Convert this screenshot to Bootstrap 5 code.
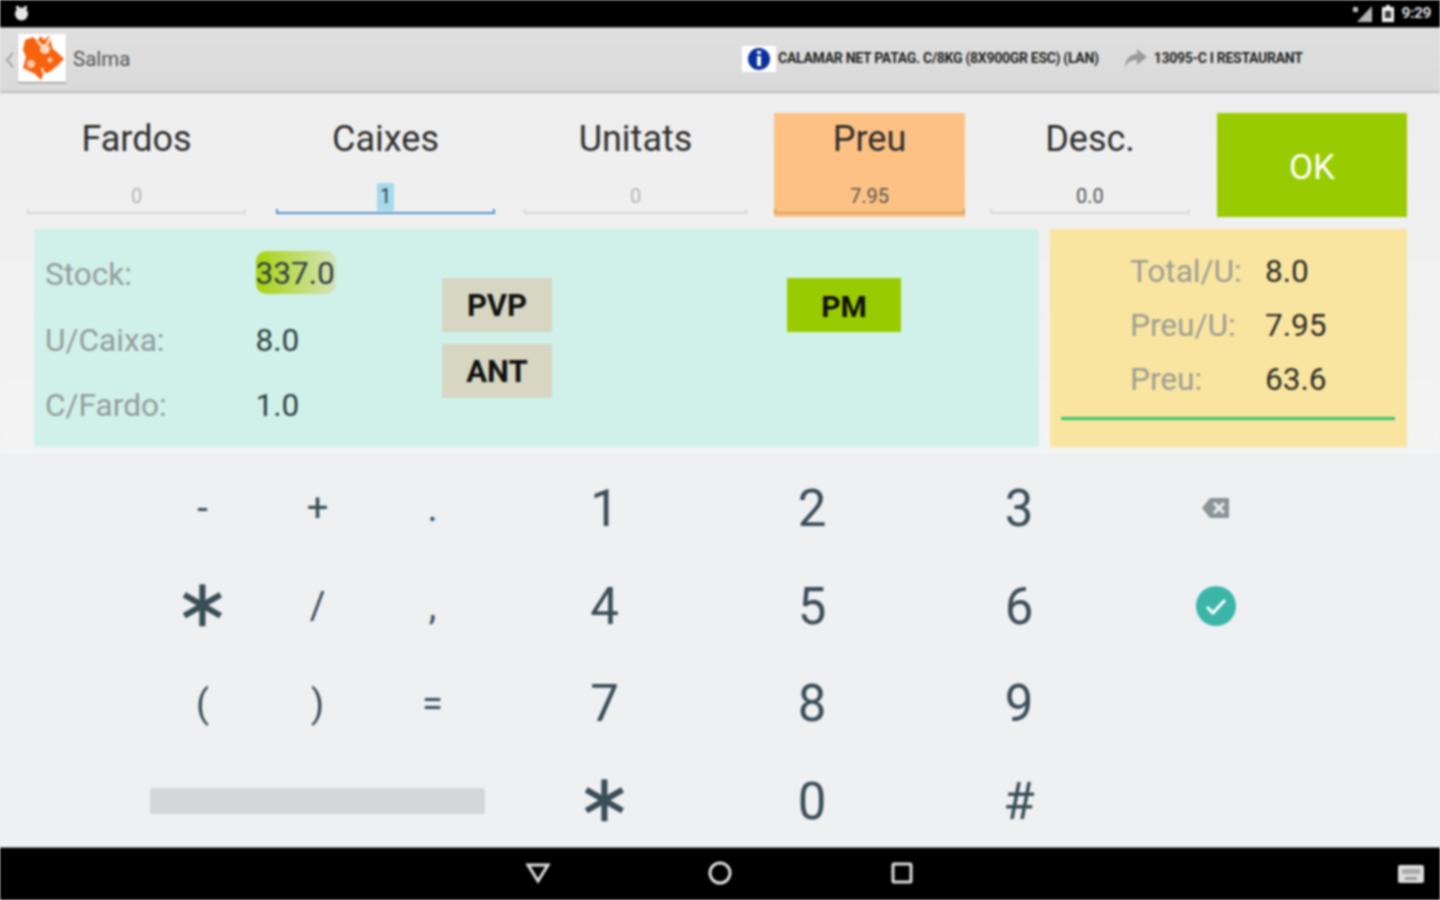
<!DOCTYPE html>
<html lang="ca">
<head>
<meta charset="utf-8">
<title>Salma</title>
<link href="https://cdn.jsdelivr.net/npm/bootstrap@5.3.0/dist/css/bootstrap.min.css" rel="stylesheet">
<style>
html,body{height:100%;margin:0;overflow:hidden}
body{font-family:Roboto,"Liberation Sans",sans-serif;background:#eef0f2;color:#37474f}
.screen{width:1440px;height:900px;filter:blur(.8px)}
.statusbar{height:27px;background:#000;color:#ddd;padding:0 9px 0 14px;font-size:15.5px;font-weight:700}
.statusbar .clock{letter-spacing:-.4px}
.appbar{height:66px;background:linear-gradient(#dfdfdf,#dadada);border-bottom:2px solid #bdbdbd;border-top:1px solid #8d8d8d;padding-left:4px}
.backmark{width:12px;margin-right:2px}
.logobox{width:48px;height:48px;background:#fff;box-shadow:0 1px 1px #888;margin-top:-3px}
.apptitle{font-size:20.5px;color:#555;margin-left:7px;width:669px;margin-top:-1px}
.infobox{width:34px;height:26px;background:#fff;margin-right:2px;margin-top:-1px}
.smallcap{font-size:14px;font-weight:700;color:#222;letter-spacing:-.28px;white-space:nowrap;margin-top:-2px}
.forward{margin-left:24px;margin-right:7px;margin-top:-3px}
.upper{height:360px;background:linear-gradient(#eeeeee,#f4f4f4);padding:20px 33px 0 27px}
.fields{display:flex;height:104px}
.fieldcell{display:flex;flex-direction:column;align-items:center;height:104px;color:#2e2e2e}
.fieldcell .lbl{font-size:36px;line-height:52px}
.fieldcell .val{font-size:20px;line-height:26px;margin-top:18px;color:#b5b5b5;height:26px}
.rule{width:100%;height:2px;background:#d6d6d6;margin-top:3px;position:relative}
.rule::before,.rule::after{content:"";position:absolute;bottom:0;width:2px;height:5px;background:inherit}
.rule::before{left:0}
.rule::after{right:0}
.f1{width:219px}
.f2{margin-left:30px;width:219px}
.f3{margin-left:29px;width:223px}
.f4{margin-left:27px;width:191px;background:#fdc283}
.f5{margin-left:25px;width:200px}
.f6{margin-left:27px;width:190px;background:#99cc00;color:#fff;font-size:35px;border-radius:0;border:0;padding:6px 0 0}
.f2 .rule{background:#4f97c9}
.f4 .rule{background:#dca060}
.f4 .val,.f5 .val{color:#555}
.sel{display:inline-block;background:#a6d9ec;color:#2f3f47;padding:0 3px;height:28px}
.panels{display:flex;gap:11px;margin:12px 0 0 7px}
.mint{width:1005px;height:218px;background:#d0f1ea;display:flex}
.sand{width:357px;height:218px;background:#f9e5a0;padding:15px 12px 0 11px}
.infocol{width:408px;padding:18px 0 0 11px}
.inforow{display:flex;font-size:31.6px;height:65.5px;line-height:56px;align-items:flex-start}
.inforow .key{width:210.5px;color:#939c9c}
.inforow .num{color:#2f3f42}
.stockval{background:linear-gradient(90deg,#a6d40f,#d6e3bb);border-radius:10px;height:43px;line-height:46px;margin-top:4px;color:#2a3a17;width:80px}
.btncol{display:flex;flex-direction:column;gap:12px;padding-top:49px;width:345px}
.tagbtn{width:110px;height:54px;background:#d6d6c2;color:#111;font-size:31px;font-weight:700;border:0;border-radius:0;padding:2px 0 0}
.tagbtn.pm{width:114px;background:#99cc00;font-size:30px}
.pmcol{padding-top:49px}
.sandrow{display:flex;font-size:31.6px;height:54px;line-height:55px}
.sandrow .keyl{width:204px;padding-left:69px;color:#9d9d94}
.sandrow .num{color:#2c2c25}
.greenrule{height:3px;background:#37c26e;margin-top:11px}
.keypad{height:394px;background:#eef0f2;padding:6px 0 0 145px;display:grid;grid-template-columns:115px 115px 115px 10.5px 208px 207px 207px 186px;grid-auto-rows:97.7px}
.keycell{display:flex;align-items:center;justify-content:center;color:#3a4e58;font-weight:400}
.sym{font-size:38px;padding-top:2px}
.dig{font-size:51px;padding-top:3px}
.astk{font-family:"DejaVu Sans",sans-serif;font-size:66px;line-height:1;padding-bottom:4px;-webkit-text-stroke:.5px #3a4e58}
.spacebar{grid-column:1/span 3;align-self:center;height:26px;margin:0 5px;background:#d3d7da;border-radius:3px}
.navbarb{height:53px;background:#000;border-top:1px solid #888;position:relative}
.navset{position:absolute;left:524px;top:12px;display:flex}
.navslot{width:182px}
.kbicon{position:absolute;right:16px;top:17px}
</style>
</head>
<body>
<div class="screen d-flex flex-column">
  <div class="statusbar d-flex align-items-center justify-content-between">
    <svg width="15" height="15" viewBox="0 0 15 15"><circle cx="7.5" cy="8" r="6.5" fill="#e6e6e6"/><rect x="2" y="0" width="3" height="3" fill="#e6e6e6"/><rect x="10" y="0" width="3" height="3" fill="#e6e6e6"/></svg>
    <div class="d-flex align-items-center">
      <svg width="22" height="18" viewBox="0 0 22 18"><path d="M20 1v16H5z" fill="#b5b5b5"/><rect x="1" y="2" width="5" height="5" fill="#bbb"/></svg>
      <svg class="mx-2" width="12" height="18" viewBox="0 0 12 18"><rect x="0" y="2" width="12" height="15" fill="#eee"/><rect x="4" y="0" width="4" height="2" fill="#eee"/><rect x="3" y="6" width="6" height="7" fill="#444"/></svg>
      <span class="clock">9:29</span>
    </div>
  </div>
  <div class="appbar d-flex align-items-center">
    <svg class="backmark" width="12" height="20" viewBox="0 0 12 20"><path d="M9 3 3 10l6 7" fill="none" stroke="#a5a5a5" stroke-width="2"/></svg>
    <div class="logobox d-flex align-items-center justify-content-center">
      <svg width="44" height="46" viewBox="0 0 44 46"><path d="M5 5 13 2 17 6 21 1 24 5 30 0 31 8 33 14 38 18 44 24 37 31 31 36 27 38 24 38 21 45 15 39 3 33 6 22 3 15z" fill="#f7620f"/><circle cx="25" cy="14" r="5" fill="#ffd9c2"/><circle cx="11" cy="29" r="4" fill="#ffc9a8"/><circle cx="30" cy="25" r="2.5" fill="#ffc9a8"/><path d="M31 0l-4 9M17 6l5 5M22 33l2 6" stroke="#fff" stroke-width="2"/></svg>
    </div>
    <div class="apptitle">Salma</div>
    <div class="infobox d-flex align-items-center justify-content-center">
      <svg width="24" height="24" viewBox="0 0 24 24"><circle cx="12" cy="12" r="11" fill="#0a2f9c"/><rect x="10" y="9" width="4" height="10" fill="#fff"/><rect x="10" y="4" width="4" height="3" fill="#fff"/></svg>
    </div>
    <div class="smallcap">CALAMAR NET PATAG. C/8KG (8X900GR ESC) (LAN)</div>
    <svg class="forward" width="24" height="24" viewBox="0 0 24 24"><path d="M14 3 24 11 14 19V14C8 14 4 16 2 22 2 13 7 8 14 8z" fill="#9a9a9a"/></svg>
    <div class="smallcap">13095-C I RESTAURANT</div>
  </div>
  <div class="upper">
    <div class="fields">
      <div class="fieldcell f1"><div class="lbl">Fardos</div><div class="val">0</div><div class="rule"></div></div>
      <div class="fieldcell f2"><div class="lbl">Caixes</div><div class="val"><span class="sel">1</span></div><div class="rule"></div></div>
      <div class="fieldcell f3"><div class="lbl">Unitats</div><div class="val">0</div><div class="rule"></div></div>
      <div class="fieldcell f4"><div class="lbl">Preu</div><div class="val">7.95</div><div class="rule"></div></div>
      <div class="fieldcell f5"><div class="lbl">Desc.</div><div class="val">0.0</div><div class="rule"></div></div>
      <button type="button" class="btn f6">OK</button>
    </div>
    <div class="panels">
      <div class="mint">
        <div class="infocol">
          <div class="inforow"><span class="key">Stock:</span><span class="num stockval">337.0</span></div>
          <div class="inforow"><span class="key">U/Caixa:</span><span class="num">8.0</span></div>
          <div class="inforow"><span class="key">C/Fardo:</span><span class="num">1.0</span></div>
        </div>
        <div class="btncol">
          <button type="button" class="btn tagbtn">PVP</button>
          <button type="button" class="btn tagbtn">ANT</button>
        </div>
        <div class="pmcol"><button type="button" class="btn tagbtn pm">PM</button></div>
      </div>
      <div class="sand">
        <div class="sandrow"><span class="keyl">Total/U:</span><span class="num">8.0</span></div>
        <div class="sandrow"><span class="keyl">Preu/U:</span><span class="num">7.95</span></div>
        <div class="sandrow"><span class="keyl">Preu:</span><span class="num">63.6</span></div>
        <div class="greenrule"></div>
      </div>
    </div>
  </div>
  <div class="keypad">
    <div class="keycell sym">-</div><div class="keycell sym">+</div><div class="keycell sym">.</div><div></div><div class="keycell dig">1</div><div class="keycell dig">2</div><div class="keycell dig">3</div>
    <div class="keycell"><svg width="30" height="24" viewBox="0 0 30 24"><path d="M9 2H28V22H9L1 12z" fill="#8a9499"/><path d="M13 7l10 10M23 7 13 17" stroke="#eef0f2" stroke-width="3"/></svg></div>
    <div class="keycell astk">∗</div><div class="keycell sym">/</div><div class="keycell sym">,</div><div></div><div class="keycell dig">4</div><div class="keycell dig">5</div><div class="keycell dig">6</div>
    <div class="keycell"><svg width="40" height="40" viewBox="0 0 40 40"><circle cx="20" cy="20" r="20" fill="#3cb5a8"/><path d="M11 21l6 6 12-13" fill="none" stroke="#fff" stroke-width="3"/></svg></div>
    <div class="keycell sym">(</div><div class="keycell sym">)</div><div class="keycell sym">=</div><div></div><div class="keycell dig">7</div><div class="keycell dig">8</div><div class="keycell dig">9</div><div></div>
    <div class="spacebar"></div><div></div><div class="keycell astk">∗</div><div class="keycell dig">0</div><div class="keycell dig">#</div><div></div>
  </div>
  <div class="navbarb">
    <div class="navset">
      <div class="navslot"><svg width="28" height="26" viewBox="0 0 28 26"><path d="M4 5H24L14 21z" fill="none" stroke="#ddd" stroke-width="3"/></svg></div>
      <div class="navslot"><svg width="28" height="26" viewBox="0 0 28 26"><circle cx="14" cy="13" r="10" fill="none" stroke="#ddd" stroke-width="3"/></svg></div>
      <div class="navslot"><svg width="28" height="26" viewBox="0 0 28 26"><rect x="5" y="4" width="18" height="18" rx="1" fill="none" stroke="#ddd" stroke-width="3"/></svg></div>
    </div>
    <svg class="kbicon" width="26" height="18" viewBox="0 0 26 18"><rect width="26" height="18" rx="2" fill="#ddd"/><rect x="4" y="4" width="18" height="5" fill="#aaa"/><rect x="7" y="12" width="12" height="3" fill="#999"/></svg>
  </div>
</div>
<script src="https://cdn.jsdelivr.net/npm/bootstrap@5.3.0/dist/js/bootstrap.bundle.min.js"></script>
</body>
</html>
